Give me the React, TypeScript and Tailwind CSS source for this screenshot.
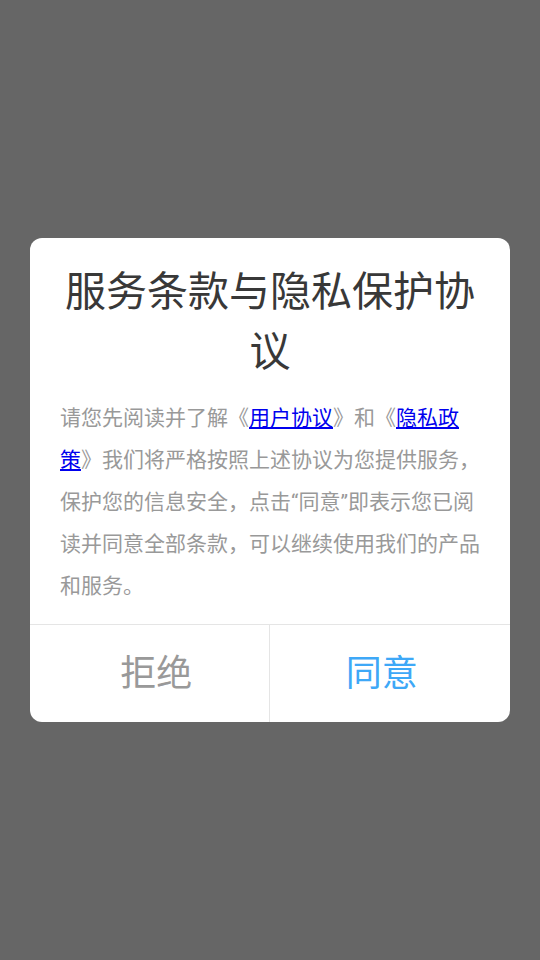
export default function App() {
  return (
    <div
      className="flex h-[960px] w-full items-center justify-center bg-[#666666]"
      style={{ fontFamily: 'Roboto, "Noto Sans CJK SC", sans-serif' }}
    >
      <div className="w-[480px] overflow-hidden rounded-xl bg-white">
        <h1 className="px-[30px] pt-[24px] text-center text-[41px] leading-[60px] font-normal text-[#383838]">
          服务条款与隐私保护协议
        </h1>
        <p className="px-[30px] pt-[15px] pb-[17px] text-[21px] leading-[42px] text-[#999999]">
          请您先阅读并了解《
          <a href="#" className="text-[#0000ee] underline">
            用户协议
          </a>
          》和《
          <a href="#" className="text-[#0000ee] underline">
            隐私政策
          </a>
          》我们将严格按照上述协议为您提供服务，保护您的信息安全，点击“同意”即表示您已阅读并同意全部条款，可以继续使用我们的产品和服务。
        </p>
        <div className="flex h-[98px] border-t border-[#e5e5e5]">
          <button className="flex flex-1 items-center justify-center border-r border-[#e5e5e5] pl-[14px] text-[36px] text-[#999999]">
            拒绝
          </button>
          <button className="flex flex-1 items-center justify-center pr-[16px] text-[36px] text-[#3ea8f7]">
            同意
          </button>
        </div>
      </div>
    </div>
  );
}
